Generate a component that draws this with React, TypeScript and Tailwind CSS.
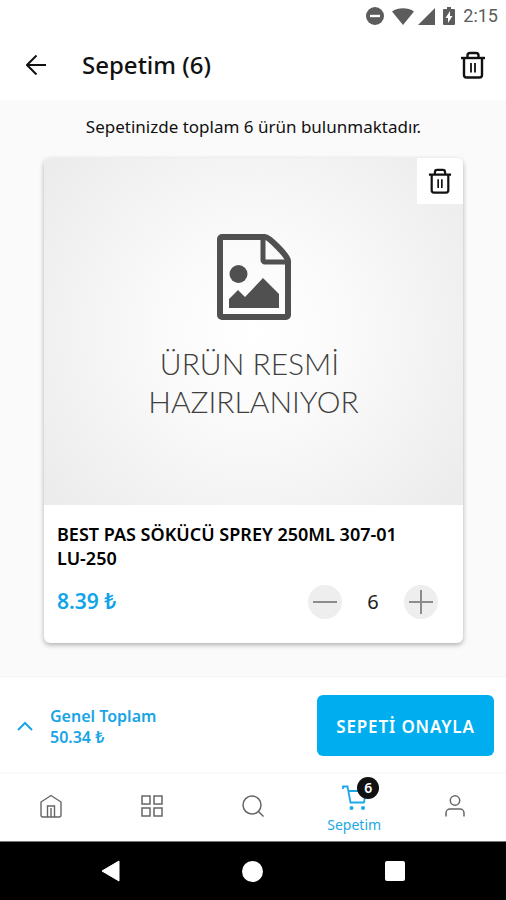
import React, { useState } from "react";

interface IconProps {
  className?: string;
}

const TrashIcon = ({ className }: IconProps) => (
  <svg viewBox="0 0 26 28" fill="none" stroke="currentColor" strokeWidth="2.4" className={className}>
    <path d="M1 7h24" />
    <path d="M7.500 7V4.500a2.500 2.500 0 0 1 2.500-2.500h6a2.500 2.500 0 0 1 2.500 2.500V7" />
    <path d="M4 7v17a2.500 2.500 0 0 0 2.500 2.500h13a2.500 2.500 0 0 0 2.500-2.500V7" />
    <path d="M11 12v9.500M15 12v9.500" strokeWidth="1.800" />
  </svg>
);

const HomeIcon = () => (
  <svg viewBox="0 0 24 24" fill="none" stroke="currentColor" strokeWidth="1.400" className="h-6 w-6">
    <path d="M12 1.500 2 8v13a2 2 0 0 0 2 2h16a2 2 0 0 0 2-2V8z" strokeLinejoin="round" />
    <path d="M8.500 23V12h7v11M12 14v9" />
  </svg>
);

const GridIcon = () => (
  <svg viewBox="0 0 24 24" fill="none" stroke="currentColor" strokeWidth="1.500" className="h-6 w-6">
    <rect x="2" y="2" width="8" height="8" />
    <rect x="14" y="2" width="8" height="8" />
    <rect x="2" y="14" width="8" height="8" />
    <rect x="14" y="14" width="8" height="8" />
  </svg>
);

const SearchIcon = () => (
  <svg viewBox="0 0 24 24" fill="none" stroke="currentColor" strokeWidth="1.500" className="h-6 w-6">
    <circle cx="11" cy="11" r="9" />
    <path d="m17.500 17.500 5 5" />
  </svg>
);

const CartIcon = () => (
  <svg viewBox="0 0 26 26" fill="none" stroke="currentColor" strokeWidth="1.800" className="h-[26px] w-[26px]">
    <path d="M2 4V1.500h4.500l3 16h14" />
    <path d="M7.500 6h17.500l-2 11.500" />
    <circle cx="10.500" cy="23" r="2" fill="currentColor" stroke="none" />
    <circle cx="22" cy="23" r="2" fill="currentColor" stroke="none" />
  </svg>
);

const UserIcon = () => (
  <svg viewBox="0 0 24 24" fill="none" stroke="currentColor" strokeWidth="1.500" className="h-6 w-6">
    <circle cx="12" cy="6.500" r="4.700" />
    <path d="M3 22.500V19a4 4 0 0 1 4-4h10a4 4 0 0 1 4 4v3.500" />
  </svg>
);

const navItems = [
  { label: "Ana Sayfa", icon: <HomeIcon /> },
  { label: "Kategoriler", icon: <GridIcon /> },
  { label: "Ara", icon: <SearchIcon /> },
  { label: "Sepetim", icon: <CartIcon />, active: true },
  { label: "Hesabım", icon: <UserIcon /> },
];

function StatusBar() {
  return (
    <div className="flex h-8 items-center justify-end pr-2 text-[#5c5c5c]">
      <svg viewBox="0 0 18 18" className="mr-2 h-[18px] w-[18px]">
        <circle cx="9" cy="9" r="9" fill="currentColor" />
        <path d="M4 9h10" stroke="white" strokeWidth="2.400" />
      </svg>
      <svg viewBox="0 0 22 17" className="mr-1 h-[17px] w-[22px]" fill="currentColor">
        <path d="M11 17 0 3.500C6-.800 16-.800 22 3.500z" />
      </svg>
      <svg viewBox="0 0 17 17" className="mr-2 h-[17px] w-[17px]" fill="currentColor">
        <path d="M17 0v17H0z" />
      </svg>
      <svg viewBox="0 0 12 18" className="mr-2 h-[18px] w-3">
        <path d="M4 0h4v2h3a1 1 0 0 1 1 1v14a1 1 0 0 1-1 1H1a1 1 0 0 1-1-1V3a1 1 0 0 1 1-1h3z" fill="currentColor" />
        <path d="M7 4v5h2.500L5 16v-5H2.500z" fill="white" />
      </svg>
      <span className="font-[Roboto] text-lg">2:15</span>
    </div>
  );
}

function ProductCard({
  quantity,
  onChange,
}: {
  quantity: number;
  onChange: (next: number) => void;
}) {
  return (
    <article className="relative overflow-hidden rounded-md bg-white shadow-[0_2px_5px_rgba(0,0,0,0.3)]">
      <div className="flex h-[347px] flex-col items-center bg-[radial-gradient(circle,#ffffff_0%,#fafafa_35%,#ececec_95%)] pt-[76px] text-[#505050]">
        <svg viewBox="0 0 74 86" className="h-[86px] w-[74px]" fill="none" stroke="currentColor" strokeWidth="6" strokeLinejoin="round">
          <path d="M5 3h43c4 0 23 19 23 24v54a2 2 0 0 1-2 2H5a2 2 0 0 1-2-2V5a2 2 0 0 1 2-2z" />
          <path d="M46 4v22a2 2 0 0 0 2 2h23" strokeWidth="5" />
          <circle cx="21.500" cy="40" r="9" fill="currentColor" stroke="none" />
          <path d="M12 74v-9l9-9 7 7 18-19 16 16v14z" fill="currentColor" stroke="none" />
        </svg>
        <p className="mt-6 mr-2 text-center font-[Lato] text-[30px] leading-[38px] font-light text-[#404040]">
          ÜRÜN RESMİ
        </p>
        <p className="text-center font-[Lato] text-[30px] leading-[38px] font-light text-[#404040]">
          HAZIRLANIYOR
        </p>
      </div>
      <button aria-label="Ürünü sil" className="absolute top-0 right-0 flex h-[46px] w-[46px] items-center justify-center bg-white text-[#111111]">
        <TrashIcon className="h-[26px] w-6" />
      </button>

      <div className="px-[13px] pt-[17px] pb-6">
        <h2 className="text-lg leading-6 font-semibold text-black">
          BEST PAS SÖKÜCÜ SPREY 250ML 307-01 <span className="whitespace-nowrap">LU-250</span>
        </h2>
        <div className="mt-[15px] flex items-center justify-between">
          <span className="text-[21px] font-semibold text-[#12a4ea]">8.39 ₺</span>
          <div className="mr-3 flex items-center text-[#8c8c8c]">
            <button
              aria-label="Azalt"
              onClick={() => onChange(Math.max(quantity - 1, 1))}
              className="flex h-[34px] w-[34px] items-center justify-center rounded-full bg-[#eeeeee]"
            >
              <svg viewBox="0 0 24 24" className="h-6 w-6" stroke="currentColor" strokeWidth="2">
                <path d="M0 12h24" />
              </svg>
            </button>
            <span className="w-[62px] text-center text-xl text-[#222222]">{quantity}</span>
            <button
              aria-label="Artır"
              onClick={() => onChange(quantity + 1)}
              className="flex h-[34px] w-[34px] items-center justify-center rounded-full bg-[#eeeeee]"
            >
              <svg viewBox="0 0 24 24" className="h-6 w-6" stroke="currentColor" strokeWidth="2">
                <path d="M0 12h24M12 0v24" />
              </svg>
            </button>
          </div>
        </div>
      </div>
    </article>
  );
}

export default function App() {
  const [quantity, setQuantity] = useState(6);
  const total = (50.34 + (quantity - 6) * 8.39).toFixed(2);

  return (
    <div className="flex min-h-screen flex-col bg-white font-['Noto_Sans',sans-serif] text-[#111111]">
      <StatusBar />

      <header className="flex h-[68px] items-center px-5 pb-[2px]">
        <button aria-label="Geri" className="flex h-8 w-8 items-center justify-center">
          <svg viewBox="0 0 20 20" className="h-5 w-5" fill="none" stroke="currentColor" strokeWidth="2">
            <path d="M20 10H1M10.500.500 1 10l9.500 9.500" />
          </svg>
        </button>
        <h1 className="ml-[30px] text-2xl font-medium">Sepetim ({quantity})</h1>
        <button aria-label="Sepeti boşalt" className="ml-auto">
          <TrashIcon className="h-7 w-[26px]" />
        </button>
      </header>

      <main className="flex-1 bg-[#fafafa] pt-[15px] pr-[43px] pb-8 pl-11">
        <p className="mb-[19px] text-center text-[17px] leading-6">
          Sepetinizde toplam {quantity} ürün bulunmaktadır.
        </p>
        <ProductCard quantity={quantity} onChange={setQuantity} />
      </main>

      {/* Order total */}
      <section className="flex h-24 items-center border-t border-[#f2f2f2] pt-[2px] pr-3 pl-[17px]">
        <button className="flex items-center text-left text-base leading-[21px] font-semibold text-[#18a5e6]">
          <svg viewBox="0 0 16 10" className="mr-[17px] h-[10px] w-4" fill="none" stroke="currentColor" strokeWidth="2">
            <path d="m1 9 7-7 7 7" />
          </svg>
          <span className="pt-[2px]">
            Genel Toplam
            <br />
            {total} ₺
          </span>
        </button>
        <button className="ml-auto h-[61px] w-[177px] rounded-md bg-[#00aeef] pt-[2px] text-[17px] font-semibold tracking-wider text-white">
          SEPETİ ONAYLA
        </button>
      </section>

      <nav className="grid h-[69px] grid-cols-5 border-t-2 border-[#fafafa] pb-1">
        {navItems.map((item) => (
          <a
            key={item.label}
            href="#"
            aria-label={item.label}
            className={`flex flex-col items-center justify-center ${
              item.active ? "pt-2 text-[#1ca8e8]" : "text-[#666666]"
            }`}
          >
            <span className="relative">
              {item.icon}
              {item.active && (
                <span className="absolute -top-2 -right-3 flex h-[22px] w-[22px] items-center justify-center rounded-full bg-[#111111] text-sm font-semibold text-white">
                  {quantity}
                </span>
              )}
            </span>
            {item.active && <span className="mt-1 text-sm">{item.label}</span>}
          </a>
        ))}
      </nav>

      {/* Android system buttons */}
      <footer className="flex h-[59px] items-center justify-around border-t border-[#777777] bg-black px-10">
        <button aria-label="Sistem geri">
          <svg viewBox="0 0 20 22" className="h-[22px] w-5" fill="white">
            <path d="M18 1 1 11l17 10z" stroke="white" strokeLinejoin="round" />
          </svg>
        </button>
        <button aria-label="Ana ekran" className="h-[21px] w-[21px] rounded-full bg-white" />
        <button aria-label="Son uygulamalar" className="h-5 w-5 rounded-xs bg-white" />
      </footer>
    </div>
  );
}
